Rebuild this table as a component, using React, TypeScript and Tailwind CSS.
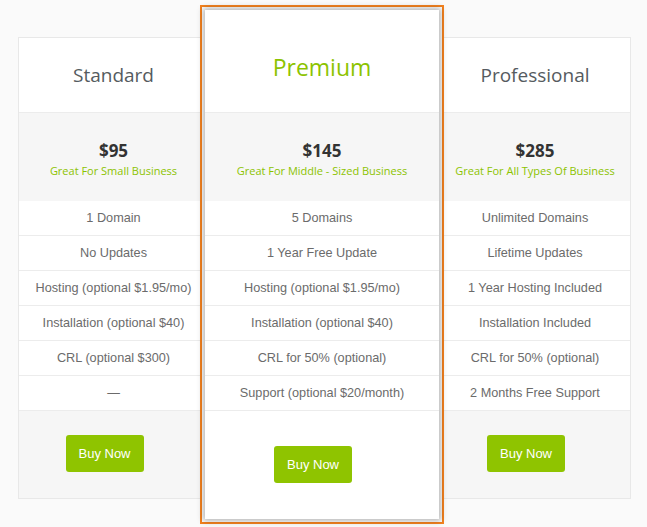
import React from "react";

type Plan = {
  name: string;
  price: string;
  tagline: string;
  features: string[];
};

const plans: Plan[] = [
  {
    name: "Standard",
    price: "$95",
    tagline: "Great For Small Business",
    features: [
      "1 Domain",
      "No Updates",
      "Hosting (optional $1.95/mo)",
      "Installation (optional $40)",
      "CRL (optional $300)",
      "—",
    ],
  },
  {
    name: "Premium",
    price: "$145",
    tagline: "Great For Middle - Sized Business",
    features: [
      "5 Domains",
      "1 Year Free Update",
      "Hosting (optional $1.95/mo)",
      "Installation (optional $40)",
      "CRL for 50% (optional)",
      "Support (optional $20/month)",
    ],
  },
  {
    name: "Professional",
    price: "$285",
    tagline: "Great For All Types Of Business",
    features: [
      "Unlimited Domains",
      "Lifetime Updates",
      "1 Year Hosting Included",
      "Installation Included",
      "CRL for 50% (optional)",
      "2 Months Free Support",
    ],
  },
];

function FeatureList({ items }: { items: string[] }) {
  return (
    <ul className="bg-white">
      {items.map((f, i) => (
        <li
          key={i}
          className="h-[35px] pt-[2px] flex items-center justify-center border-b border-[#ececec] text-[12.7px] text-[#6b6b6b] font-['Liberation_Sans',Arial,sans-serif]"
        >
          {f}
        </li>
      ))}
    </ul>
  );
}

function BuyButton() {
  return (
    <button className="mr-[18px] w-[78px] h-[37px] rounded-[3px] bg-[#8fc400] text-white text-[13px] font-['Liberation_Sans',Arial,sans-serif]">
      Buy Now
    </button>
  );
}

function PriceBox({ plan }: { plan: Plan }) {
  return (
    <div className="h-[88px] bg-[#f6f6f6] flex flex-col items-center justify-center pt-[5px]">
      <div className="text-[17px] font-bold text-[#333] font-['Open_Sans',sans-serif] leading-6">
        {plan.price}
      </div>
      <div className="text-[11px] text-[#8cc300] font-['Open_Sans',sans-serif]">
        {plan.tagline}
      </div>
    </div>
  );
}

function SideColumn({ plan, className }: { plan: Plan; className: string }) {
  return (
    <div className={className}>
      <div className="h-[75px] bg-white flex items-center justify-center border-b border-[#ececec]">
        <h2 className="text-[19px] text-[#555b60] font-['Open_Sans',sans-serif]">
          {plan.name}
        </h2>
      </div>
      <PriceBox plan={plan} />
      <FeatureList items={plan.features} />
      <div className="h-[87px] bg-[#f6f6f6] flex justify-center pt-[24px]">
        <BuyButton />
      </div>
    </div>
  );
}

export default function App() {
  const [standard, premium, professional] = plans;
  return (
    <div className="w-[647px] h-[527px] bg-[#fafafa] overflow-hidden">
      <div className="flex items-start pl-[18px] pt-[37px]">
        <SideColumn
          plan={standard}
          className="w-[190px] border border-r-0 border-[#e8e8e8]"
        />
        {/* highlighted plan sits over the neighbours */}
        <div className="relative z-10 -mt-[32px] -ml-[8px] -mr-[4px] w-[244px] h-[519px] border-2 border-[#f5831f] bg-white p-[3px]">
          <div className="h-full bg-white shadow-[0_0_6px_2px_rgba(0,0,0,0.3)]">
            <div className="h-[103px] flex items-center justify-center border-b border-[#ececec] pt-[12px]">
              <h2 className="text-[23px] text-[#8cc300] font-['Open_Sans',sans-serif]">
                {premium.name}
              </h2>
            </div>
            <PriceBox plan={premium} />
            <FeatureList items={premium.features} />
            <div className="flex justify-center pt-[35px]">
              <BuyButton />
            </div>
          </div>
        </div>
        <SideColumn
          plan={professional}
          className="w-[191px] border border-l-0 border-[#e8e8e8]"
        />
      </div>
    </div>
  );
}
